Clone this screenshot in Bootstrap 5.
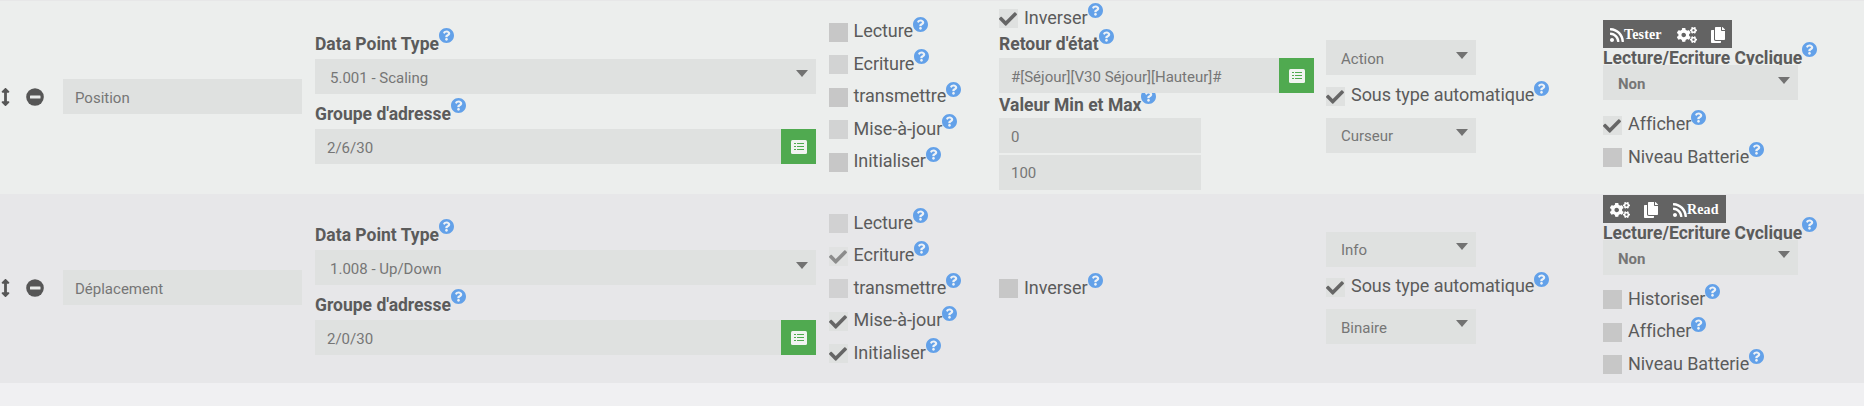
<!DOCTYPE html>
<html lang="fr">
<head>
<meta charset="utf-8">
<meta name="viewport" content="width=device-width, initial-scale=1">
<title>Commandes</title>
<link rel="stylesheet" href="https://cdn.jsdelivr.net/npm/bootstrap@5.3.0/dist/css/bootstrap.min.css">
<style>
body{background:#f0f0f2;color:#5b5b5b;font-family:Roboto,sans-serif;font-size:18px;overflow:hidden}
svg{display:block;flex:none}
.cmd-table{border-top:1px solid #e7e7e8}
.cmd-row{height:193px;background:#eceeed}
.cmd-row.alt{height:189px;background:#e7e7e9}
.cmd-row>div{flex:none;display:flex;flex-direction:column;justify-content:center}
.c-tools{width:63px;padding:0 0 2px 1px}
.c-name{width:252px;padding:0 13px 2px 0}
.c-addr{width:514px;padding:2px 13px 0 0}
.c-flags{width:170px;gap:13.5px;padding-bottom:.4px}
.alt .c-flags{padding-bottom:0}
.c-state{width:327px}
.c-type{width:277px;padding-bottom:2px}
.c-opts{width:261px}
.cmd-row>.top{justify-content:flex-start}
.field{height:35px;background:#dfe1e0;color:#767676;border:0;border-radius:0;padding:0 12px;font-size:15px;line-height:38px;display:flex;flex:none;width:100%}
.field.up{line-height:36px}
.picker{display:flex;position:relative;z-index:1}
.picker .field{flex:1;width:auto}
.field.pick{padding:0 8px 0 15px;justify-content:space-between}
.pick:after{content:"";border:solid transparent;border-width:7px 6.5px 0;border-top-color:#727272;height:0;margin-top:11px}
.pick.low:after{margin-top:12px}
.btn-list{width:35px;height:35px;background:#50aa50;border:0;border-radius:0;padding:0;flex:none;display:flex;align-items:center;justify-content:center}
.w-type{width:150px}.w-cycle{width:195px}.w-minmax{width:202px}
.ttl{display:flex;height:20px;flex:none;font-size:17.5px;font-weight:700;line-height:22px;white-space:nowrap}
.help{width:15px;height:15px;fill:#63a1e9;margin-top:-5px}
.chk{display:flex;height:19px;flex:none;line-height:19px;white-space:nowrap;letter-spacing:-.05px}
.chk i{width:19px;height:19px;background:#c7c7c7;margin-right:6px;flex:none}
.c-flags .chk i{margin-right:5.5px}
.chk span{margin-top:-2px}
.chk.dn span{margin-top:-1px}
.chk .help{margin-top:-6px}
.chk.on i{background:#dfe1e0}
.chk.off i{opacity:.7}
.chk.on svg.tick{width:18px;height:18px;fill:#666;margin-top:1px}
.bar{height:28px;padding:0 7px;background:#636363;color:#fff;fill:#fff;font:700 14px/28px "Liberation Serif",serif;letter-spacing:.15px;flex:none;align-self:flex-start;display:flex;align-items:center}
.bar span{margin-top:2px}
.bar svg{margin-top:1px}
.g14{margin-left:14px}.g15{margin-left:15px}
/* vertical rhythm inside the cells */
.mt-a{margin-top:6px}.mt-b{margin-top:9px}
.state-full{padding-top:8px}
.state-full .ttl{margin-top:5px}
.state-full .ttl+.picker{margin:5px 12px 0 0}
.state-full .ttl .help{margin-top:-4px}
.state-full .picker+.ttl{margin-top:1px}
.state-full .picker+.ttl .help{margin-top:-5px}
.state-full .ttl+.field{margin-top:4px}
.state-full .field+.field{margin-top:2px}
.c-type .chk{margin:12px 0}
.alt .c-type .chk{margin:11px 0 12px}
.c-opts .bar{margin-top:19px}
.alt .c-opts .bar{margin-top:1px}
.c-opts .ttl{height:18px;margin-top:-1px}
.c-opts .chk{margin-top:13px}
.c-opts .field+.chk{margin-top:16px}
.alt .c-opts .field+.chk{margin-top:15px}
.alt .c-opts .field+.chk+.chk{margin-top:14px}
.c-tools svg{fill:#565656}
.c-tools svg+svg{margin-left:16px}
</style>
</head>
<body>
<svg width="0" height="0" class="position-absolute" aria-hidden="true">
<symbol id="q" viewBox="8 8 496 496"><circle cx="256" cy="256" r="200" fill="#eef2f6"/><path d="M504 256c0 136.997-111.043 248-248 248S8 392.997 8 256C8 119.083 119.043 8 256 8s248 111.083 248 248zM262.655 90c-54.497 0-89.255 22.957-116.549 63.758-3.536 5.286-2.353 12.415 2.715 16.258l34.699 26.31c5.205 3.947 12.621 3.008 16.665-2.122 17.864-22.658 30.113-35.797 57.303-35.797 20.429 0 45.698 13.148 45.698 32.958 0 14.976-12.363 22.667-32.534 33.976C247.128 238.528 216 254.941 216 296v4c0 6.627 5.373 12 12 12h56c6.627 0 12-5.373 12-12v-1.333c0-28.462 83.186-29.647 83.186-106.667 0-58.002-60.165-102-116.531-102zM256 338c-25.365 0-46 20.635-46 46 0 25.364 20.635 46 46 46s46-20.636 46-46c0-25.365-20.635-46-46-46z"/></symbol>
<symbol id="tick" viewBox="0 0 512 512"><path d="M173.898 439.404l-166.4-166.4c-9.997-9.997-9.997-26.206 0-36.204l36.203-36.204c9.997-9.998 26.207-9.998 36.204 0L192 312.69 432.095 72.596c9.997-9.997 26.207-9.997 36.204 0l36.203 36.204c9.997 9.997 9.997 26.206 0 36.204l-294.4 294.401c-9.998 9.997-26.207 9.997-36.204-.001z"/></symbol>
<symbol id="sort" viewBox="0 0 256 512"><path d="M214.059 377.941H168V134.059h46.059c21.382 0 32.09-25.851 16.971-40.971L144.971 7.029c-9.373-9.373-24.568-9.373-33.941 0L24.971 93.088c-15.119 15.119-4.411 40.971 16.971 40.971H88v243.882H41.941c-21.382 0-32.09 25.851-16.971 40.971l86.059 86.059c9.373 9.373 24.568 9.373 33.941 0l86.059-86.059c15.12-15.119 4.412-40.971-16.97-40.971z"/></symbol>
<symbol id="minus" viewBox="0 0 18 18"><circle cx="9" cy="9" r="8.8"/><rect x="4" y="7.5" width="10.5" height="3" rx=".5" fill="#e9ebea"/></symbol>
<symbol id="list" viewBox="0 0 16 14"><rect width="16" height="14" rx="1.5" fill="#f1f4f1"/><path d="M3 3.5h2M3 6.5h2M3 9.5h2M6 3.5h7M6 6.5h7M6 9.5h7" stroke="#50aa50"/></symbol>
<symbol id="rss" viewBox="0 0 448 512"><path d="M128.081 415.959c0 35.369-28.672 64.041-64.041 64.041S0 451.328 0 415.959s28.672-64.041 64.041-64.041 64.04 28.673 64.04 64.041zm175.66 47.25c-8.354-154.6-132.185-278.587-286.95-286.95C7.656 175.765 0 183.105 0 192.253v48.069c0 8.415 6.49 15.472 14.887 16.018 111.832 7.284 201.473 96.702 208.772 208.772.547 8.397 7.604 14.887 16.018 14.887h48.069c9.149.001 16.489-7.655 15.995-16.79zm144.249.288C439.596 229.677 251.465 40.445 16.503 32.01 7.473 31.686 0 38.981 0 48.016v48.068c0 8.625 6.835 15.645 15.453 15.999 191.179 7.839 344.627 161.316 352.465 352.465.353 8.618 7.373 15.453 15.999 15.453h48.068c9.034-.001 16.329-7.474 16.005-16.504z"/></symbol>
<symbol id="gears" viewBox="0 0 640 512"><path id="cog" d="M512.1 191l-8.2 14.3c-3 5.3-9.4 7.5-15.1 5.4-11.8-4.4-22.6-10.7-32.1-18.6-4.6-3.8-5.8-10.5-2.8-15.7l8.2-14.3c-6.9-8-12.3-17.3-15.9-27.4h-16.5c-6 0-11.2-4.3-12.2-10.3-2-12-2.1-24.6 0-37.1 1-6 6.2-10.4 12.2-10.4h16.5c3.6-10.1 9-19.4 15.9-27.4l-8.2-14.3c-3-5.2-1.9-11.9 2.8-15.7 9.5-7.9 20.4-14.2 32.1-18.6 5.7-2.1 12.1.1 15.1 5.4l8.2 14.3c10.5-1.9 21.2-1.9 31.7 0L552 6.3c3-5.3 9.4-7.5 15.1-5.4 11.8 4.4 22.6 10.7 32.1 18.6 4.6 3.8 5.8 10.5 2.8 15.7l-8.2 14.3c6.9 8 12.3 17.3 15.9 27.4h16.5c6 0 11.2 4.3 12.2 10.3 2 12 2.1 24.6 0 37.1-1 6-6.2 10.4-12.2 10.4h-16.5c-3.6 10.1-9 19.4-15.9 27.4l8.2 14.3c3 5.2 1.9 11.9-2.8 15.7-9.5 7.9-20.4 14.2-32.1 18.6-5.7 2.1-12.1-.1-15.1-5.4l-8.2-14.3c-10.4 1.9-21.2 1.9-31.7 0zm-10.5-58.8c38.5 29.6 82.4-14.3 52.8-52.8-38.5-29.7-82.4 14.3-52.8 52.8z"/><use href="#cog" y="298.7"/><path d="M386.3 286.1l33.7 16.8c10.1 5.8 14.5 18.1 10.5 29.1-8.9 24.2-26.4 46.4-42.6 65.8-7.4 8.9-20.2 11.1-30.3 5.3l-29.1-16.8c-16 13.7-34.6 24.6-54.9 31.7v33.6c0 11.6-8.3 21.6-19.7 23.6-24.6 4.2-50.4 4.4-75.9 0-11.5-2-20-11.9-20-23.6V418c-20.3-7.2-38.9-18-54.9-31.7L74 403c-10 5.8-22.9 3.6-30.3-5.3-16.2-19.4-33.3-41.6-42.2-65.7-4-10.9.4-23.2 10.5-29.1l33.3-16.8c-3.9-20.9-3.9-42.4 0-63.4L12 205.8c-10.1-5.8-14.6-18.1-10.5-29 8.9-24.2 26-46.4 42.2-65.8 7.4-8.9 20.2-11.1 30.3-5.3l29.1 16.8c16-13.7 34.6-24.6 54.9-31.7V57.1c0-11.5 8.2-21.5 19.6-23.5 24.6-4.2 50.5-4.4 76-.1 11.5 2 20 11.9 20 23.6v33.6c20.3 7.2 38.9 18 54.9 31.7l29.1-16.8c10-5.8 22.9-3.6 30.3 5.3 16.2 19.4 33.2 41.6 42.1 65.8 4 10.9.1 23.2-10 29.1l-33.7 16.8c3.9 21 3.9 42.5 0 63.5zm-117.6 21.1c59.2-77-28.7-164.9-105.7-105.7-59.2 77 28.7 164.9 105.7 105.7z"/></symbol>
<symbol id="copy" viewBox="0 0 448 512"><path d="M320 448v40c0 13.255-10.745 24-24 24H24c-13.255 0-24-10.745-24-24V120c0-13.255 10.745-24 24-24h72v296c0 30.879 25.121 56 56 56h168zm0-344V0H152c-13.255 0-24 10.745-24 24v368c0 13.255 10.745 24 24 24h272c13.255 0 24-10.745 24-24V128H344c-13.2 0-24-10.8-24-24zm120.971-31.029L375.029 7.029A24 24 0 0 0 358.059 0H352v96h96v-6.059a24 24 0 0 0-7.029-16.97z"/></symbol>
</svg>

<main class="cmd-table">
<section class="cmd-row d-flex">
  <div class="c-tools"><div class="d-flex align-items-center"><svg width="9" height="18"><use href="#sort"/></svg><svg width="18" height="18"><use href="#minus"/></svg></div></div>
  <div class="c-name"><div class="field">Position</div></div>
  <div class="c-addr">
    <div class="ttl"><span>Data Point Type</span><svg class="help"><use href="#q"/></svg></div>
    <div class="field pick mt-a">5.001 - Scaling</div>
    <div class="ttl mt-b"><span>Groupe d'adresse</span><svg class="help"><use href="#q"/></svg></div>
    <div class="picker mt-a"><div class="field">2/6/30</div><button class="btn btn-list" aria-label="Liste"><svg width="16" height="14"><use href="#list"/></svg></button></div>
  </div>
  <div class="c-flags">
    <div class="chk"><i></i><span>Lecture</span><svg class="help"><use href="#q"/></svg></div>
    <div class="chk off dn"><i></i><span>Ecriture</span><svg class="help"><use href="#q"/></svg></div>
    <div class="chk"><i></i><span>transmettre</span><svg class="help"><use href="#q"/></svg></div>
    <div class="chk off dn"><i></i><span>Mise-à-jour</span><svg class="help"><use href="#q"/></svg></div>
    <div class="chk"><i></i><span>Initialiser</span><svg class="help"><use href="#q"/></svg></div>
  </div>
  <div class="c-state top state-full">
    <div class="chk on dn"><i><svg class="tick"><use href="#tick"/></svg></i><span>Inverser</span><svg class="help"><use href="#q"/></svg></div>
    <div class="ttl"><span>Retour d'état</span><svg class="help"><use href="#q"/></svg></div>
    <div class="picker"><div class="field">#[Séjour][V30 Séjour][Hauteur]#</div><button class="btn btn-list" aria-label="Liste"><svg width="16" height="14"><use href="#list"/></svg></button></div>
    <div class="ttl"><span>Valeur Min et Max</span><svg class="help"><use href="#q"/></svg></div>
    <div class="field w-minmax">0</div>
    <div class="field up w-minmax">100</div>
  </div>
  <div class="c-type">
    <div class="field pick low w-type">Action</div>
    <div class="chk on"><i><svg class="tick"><use href="#tick"/></svg></i><span>Sous type automatique</span><svg class="help"><use href="#q"/></svg></div>
    <div class="field pick up w-type">Curseur</div>
  </div>
  <div class="c-opts top">
    <div class="bar"><svg width="14" height="16"><use href="#rss"/></svg><span>Tester</span><svg class="g15" width="20" height="16"><use href="#gears"/></svg><svg class="g14" width="14" height="16"><use href="#copy"/></svg></div>
    <div class="ttl"><span>Lecture/Ecriture Cyclique</span><svg class="help"><use href="#q"/></svg></div>
    <div class="field pick low w-cycle fw-bold">Non</div>
    <div class="chk on"><i><svg class="tick"><use href="#tick"/></svg></i><span>Afficher</span><svg class="help"><use href="#q"/></svg></div>
    <div class="chk dn"><i></i><span>Niveau Batterie</span><svg class="help"><use href="#q"/></svg></div>
  </div>
</section>

<section class="cmd-row alt d-flex">
  <div class="c-tools"><div class="d-flex align-items-center"><svg width="9" height="18"><use href="#sort"/></svg><svg width="18" height="18"><use href="#minus"/></svg></div></div>
  <div class="c-name"><div class="field">Déplacement</div></div>
  <div class="c-addr">
    <div class="ttl"><span>Data Point Type</span><svg class="help"><use href="#q"/></svg></div>
    <div class="field pick low mt-a">1.008 - Up/Down</div>
    <div class="ttl mt-b"><span>Groupe d'adresse</span><svg class="help"><use href="#q"/></svg></div>
    <div class="picker mt-a"><div class="field">2/0/30</div><button class="btn btn-list" aria-label="Liste"><svg width="16" height="14"><use href="#list"/></svg></button></div>
  </div>
  <div class="c-flags">
    <div class="chk off dn"><i></i><span>Lecture</span><svg class="help"><use href="#q"/></svg></div>
    <div class="chk on off"><i><svg class="tick"><use href="#tick"/></svg></i><span>Ecriture</span><svg class="help"><use href="#q"/></svg></div>
    <div class="chk off dn"><i></i><span>transmettre</span><svg class="help"><use href="#q"/></svg></div>
    <div class="chk on"><i><svg class="tick"><use href="#tick"/></svg></i><span>Mise-à-jour</span><svg class="help"><use href="#q"/></svg></div>
    <div class="chk on dn"><i><svg class="tick"><use href="#tick"/></svg></i><span>Initialiser</span><svg class="help"><use href="#q"/></svg></div>
  </div>
  <div class="c-state">
    <div class="chk dn"><i></i><span>Inverser</span><svg class="help"><use href="#q"/></svg></div>
  </div>
  <div class="c-type">
    <div class="field pick up w-type">Info</div>
    <div class="chk on"><i><svg class="tick"><use href="#tick"/></svg></i><span>Sous type automatique</span><svg class="help"><use href="#q"/></svg></div>
    <div class="field pick w-type">Binaire</div>
  </div>
  <div class="c-opts top">
    <div class="bar"><svg width="20" height="16"><use href="#gears"/></svg><svg class="g14" width="14" height="16"><use href="#copy"/></svg><svg class="g15" width="14" height="16"><use href="#rss"/></svg><span>Read</span></div>
    <div class="ttl"><span>Lecture/Ecriture Cyclique</span><svg class="help"><use href="#q"/></svg></div>
    <div class="field pick w-cycle fw-bold">Non</div>
    <div class="chk dn"><i></i><span>Historiser</span><svg class="help"><use href="#q"/></svg></div>
    <div class="chk"><i></i><span>Afficher</span><svg class="help"><use href="#q"/></svg></div>
    <div class="chk dn"><i></i><span>Niveau Batterie</span><svg class="help"><use href="#q"/></svg></div>
  </div>
</section>
</main>
<script src="https://cdn.jsdelivr.net/npm/bootstrap@5.3.0/dist/js/bootstrap.bundle.min.js"></script>
</body>
</html>
